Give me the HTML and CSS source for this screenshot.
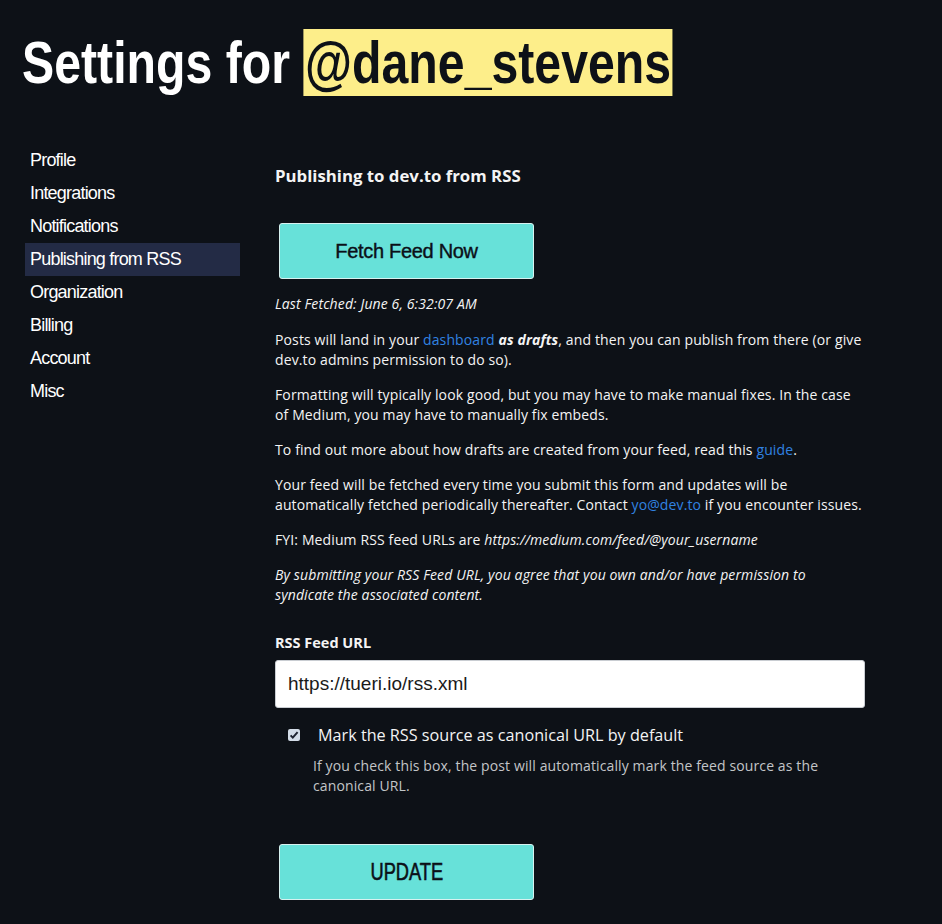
FILE: index.html
```html
<!DOCTYPE html>
<html lang="en">
<head>
<meta charset="utf-8">
<title>Settings</title>
<link rel="stylesheet" href="styles.css">
</head>
<body>
<div class="page">
  <h1 class="title">Settings for <span class="handle">@dane_stevens</span></h1>
  <div class="layout">
    <nav class="sidenav">
      <a class="nav-item" href="#">Profile</a>
      <a class="nav-item" href="#">Integrations</a>
      <a class="nav-item" href="#">Notifications</a>
      <a class="nav-item active" href="#">Publishing from RSS</a>
      <a class="nav-item" href="#">Organization</a>
      <a class="nav-item" href="#">Billing</a>
      <a class="nav-item" href="#">Account</a>
      <a class="nav-item" href="#">Misc</a>
    </nav>
    <main class="content">
      <h3 class="section-title">Publishing to dev.to from RSS</h3>
      <button class="btn btn-fetch">Fetch Feed Now</button>
      <p class="fetched"><em>Last Fetched: June 6, 6:32:07 AM</em></p>
      <p>Posts will land in your <a href="#">dashboard</a> <strong><em>as drafts</em></strong>, and then you can publish from there (or give dev.to admins permission to do so).</p>
      <p>Formatting will typically look good, but you may have to make manual fixes. In the case of Medium, you may have to manually fix embeds.</p>
      <p>To find out more about how drafts are created from your feed, read this <a href="#">guide</a>.</p>
      <p>Your feed will be fetched every time you submit this form and updates will be automatically fetched periodically thereafter. Contact <a href="#">yo@dev.to</a> if you encounter issues.</p>
      <p>FYI: Medium RSS feed URLs are <em>https://medium.com/feed/@your_username</em></p>
      <p><em>By submitting your RSS Feed URL, you agree that you own and/or have permission to syndicate the associated content.</em></p>
      <label class="field-label" for="feed">RSS Feed URL</label>
      <input class="field-input" id="feed" type="text" value="https://tueri.io/rss.xml">
      <label class="check-row">
        <span class="check-box">
          <svg width="12" height="12" viewBox="0 0 12 12"><path d="M2.6 6.4 L4.8 8.6 L9.6 3.2" fill="none" stroke="#1d2230" stroke-width="2"/></svg>
        </span>
        <span class="check-label">Mark the RSS source as canonical URL by default</span>
      </label>
      <p class="help">If you check this box, the post will automatically mark the feed source as the canonical URL.</p>
      <button class="btn btn-update"><span class="update-text">UPDATE</span></button>
    </main>
  </div>
</div>
</body>
</html>
```
FILE: styles.css
```css
html, body {
  margin: 0;
  padding: 0;
  background: #0d1117;
}
body {
  color: #f4f4f4;
  font-family: "Open Sans", "Noto Sans", sans-serif;
  width: 942px;
  height: 924px;
  overflow: hidden;
}
.page {
  padding: 29px 0 0 22px;
}
.title {
  margin: 0;
  font-family: "Liberation Sans", Arial, sans-serif;
  font-weight: bold;
  font-size: 60px;
  line-height: 67px;
  color: #ffffff;
  transform: scaleX(0.804);
  transform-origin: left center;
  white-space: nowrap;
}
.handle {
  background: #fdee8a;
  color: #0d1117;
  padding: 0 2px 0 2px;
}
.layout {
  display: flex;
  margin-top: 48px;
}
.sidenav {
  display: flex;
  flex-direction: column;
  width: 215px;
  margin-left: 3px;
  flex: none;
}
.nav-item {
  display: block;
  height: 33px;
  line-height: 33px;
  padding-left: 5px;
  color: #ffffff;
  text-decoration: none;
  font-family: "Liberation Sans", Arial, sans-serif;
  font-size: 18px;
  letter-spacing: -0.8px;
}
.nav-item.active {
  background: #232b45;
}
.content {
  margin-left: 35px;
  width: 590px;
  padding-top: 21px;
}
.section-title {
  margin: 0;
  font-family: "Open Sans", sans-serif;
  font-size: 16.8px;
  font-weight: bold;
  line-height: 22px;
}
.btn {
  display: block;
  width: 255px;
  height: 56px;
  margin-left: 4px;
  padding: 0;
  background: #67e1d9;
  border: 1px solid #d7f2f0;
  border-radius: 3px;
  color: #0b0f17;
  font-family: "Liberation Sans", Arial, sans-serif;
  font-size: 20px;
  letter-spacing: -0.3px;
  -webkit-text-stroke: 0.4px #0b0f17;
  cursor: pointer;
}
.btn-fetch {
  margin-top: 36px;
  margin-bottom: 15px;
}
.btn-update {
  margin-top: 48px;
}
.update-text {
  display: inline-block;
  font-size: 24px;
  letter-spacing: 0;
  transform: scaleX(0.76);
  -webkit-text-stroke: 0.6px #0b0f17;
}
p {
  margin: 0 0 15px;
  font-size: 14px;
  line-height: 20px;
  letter-spacing: 0.12px;
}
.fetched {
  margin-bottom: 16px;
}
a {
  color: #3183e2;
  text-decoration: none;
}
.field-label {
  display: block;
  margin-top: 28px;
  font-size: 14.5px;
  font-weight: bold;
  line-height: 20px;
}
.field-input {
  display: block;
  box-sizing: border-box;
  width: 590px;
  height: 48px;
  margin-top: 7px;
  padding: 0 12px;
  border: 1px solid #c9cdd2;
  border-radius: 3px;
  background: #ffffff;
  color: #1a1a1a;
  font-family: "Liberation Sans", Arial, sans-serif;
  font-size: 19px;
}
.check-row {
  display: flex;
  align-items: center;
  gap: 18px;
  margin: 15px 0 0 13px;
}
.check-box {
  display: flex;
  align-items: center;
  justify-content: center;
  width: 12px;
  height: 12px;
  background: #d3dce8;
  border-radius: 2px;
  flex: none;
}
.check-label {
  font-size: 16.2px;
  line-height: 24px;
}
.help {
  margin: 9px 0 0 38px;
  color: #c3c5c8;
  font-size: 14px;
  line-height: 20px;
}
```
